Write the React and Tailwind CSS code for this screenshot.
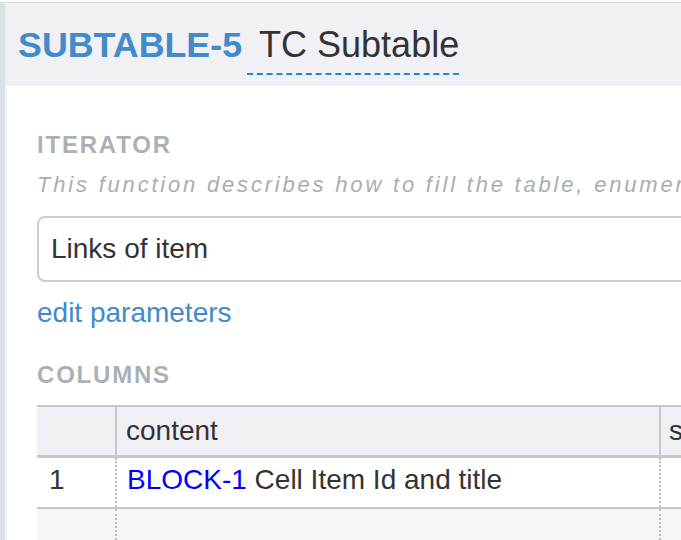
export default function App() {
  const font = { fontFamily: '"Liberation Sans", Arial, sans-serif' }

  return (
    <div className="w-[681px] h-[540px] overflow-hidden bg-white pt-[2px]" style={font}>
      <div className="flex h-full border-t border-[#d9d9dd]">
        <div className="w-[5px] shrink-0 bg-[#dce1e5]" />
        <div className="w-[1100px] shrink-0 bg-[#f0f0f5] rounded-tl-[3px]">
          {/* header */}
          <div className="h-[83px] pl-[13px] pt-[22px] flex items-start leading-[40px]">
            <span className="text-[35.8px] font-bold text-[#428bca]">SUBTABLE-5</span>
            <span className="ml-[5px] pl-[12px] pb-[8px] border-b-2 border-dashed border-[#1b8ad3] text-[36px] text-[#333]">
              TC Subtable
            </span>
          </div>

          {/* body */}
          <div className="ml-[2px] bg-white h-full pl-[30px] pt-[45px]">
            <div className="text-[24px] leading-[28px] font-bold tracking-[1.8px] text-[#abb1b6]">ITERATOR</div>
            <div className="mt-[13px] text-[22px] leading-[26px] italic tracking-[2.8px] text-[#a8aeb3] whitespace-nowrap">
              This function describes how to fill the table, enumerating the items whose links are listed
            </div>

            <div className="mt-[18px] w-[900px] h-[66px] border-2 border-[#cccccc] rounded-[8px] flex items-center pl-[12px] text-[28px] leading-[32px] text-[#333]">
              Links of item
            </div>

            <div className="mt-[15px] text-[28px] leading-[32px] text-[#428bca]">edit parameters</div>

            <div className="mt-[32px] text-[24px] leading-[28px] font-bold tracking-[1.8px] text-[#abb1b6]">COLUMNS</div>

            <div className="mt-[16px] w-[1000px] text-[28px] leading-[32px] text-[#333]">
              <div className="flex h-[53px] bg-[#f0f0f4] border-t-2 border-b-[3px] border-[#c8c8c8]">
                <div className="w-[78px] shrink-0" />
                <div className="w-[544px] shrink-0 border-l-2 border-[#c8c8c8] flex items-center pl-[9px]">content</div>
                <div className="flex-1 border-l-2 border-[#c8c8c8] flex items-center pl-[8px]">style</div>
              </div>
              <div className="flex h-[51px] bg-white border-b-2 border-[#c8c8c8]">
                <div className="w-[78px] shrink-0 pl-[12px] pt-[6px]">1</div>
                <div className="w-[544px] shrink-0 border-l-2 border-dotted border-[#bdbdbd] pl-[10px] pt-[6px] whitespace-nowrap">
                  <span className="text-[#0000ff]">BLOCK-1</span> Cell Item Id and title
                </div>
                <div className="flex-1 border-l-2 border-dotted border-[#bdbdbd]" />
              </div>
              <div className="flex h-[51px] bg-[#f5f5f8]">
                <div className="w-[78px] shrink-0" />
                <div className="w-[544px] shrink-0 border-l-2 border-dotted border-[#bdbdbd]" />
                <div className="flex-1 border-l-2 border-dotted border-[#bdbdbd]" />
              </div>
            </div>
          </div>
        </div>
      </div>
    </div>
  )
}
